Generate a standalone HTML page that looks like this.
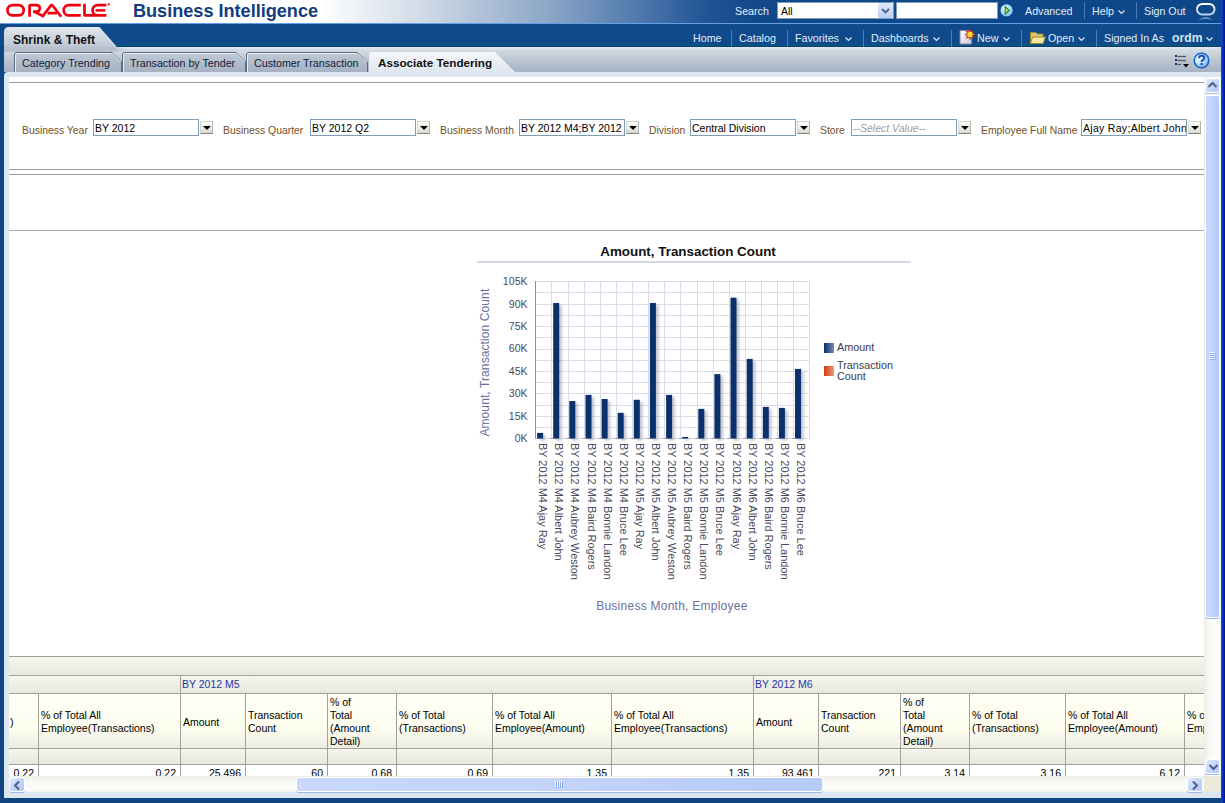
<!DOCTYPE html>
<html><head><meta charset="utf-8">
<style>
*{box-sizing:border-box;margin:0;padding:0}
html,body{width:1225px;height:803px;overflow:hidden;background:#0e4582;font-family:"Liberation Sans",sans-serif;}
.a{position:absolute;white-space:nowrap}
#hdr{left:0;top:0;width:1221px;height:23px;background:linear-gradient(to right,#fff 0,#fff 320px,#d0dae6 422px,#8ea8c8 545px,#3c6aa4 667px,#1f5394 708px,#10488a 760px,#0e488a 1221px)}
#hline{left:0;top:23px;width:1221px;height:1px;background:#62a0ea}
#nav{left:0;top:24px;width:1221px;height:23px;background:#0e4a8c}
#navb{left:0;top:44px;width:1221px;height:3px;background:linear-gradient(#0a5282,#0a5080 60%,#043a6c)}
#rb{left:1221px;top:0;width:4px;height:803px;background:linear-gradient(to right,#0a4df0,#0030c8 50%,#001878)}
#bb{left:0;top:798px;width:1221px;height:5px;background:#0e4582}
#strip{left:4px;top:47px;width:1217px;height:25px;background:linear-gradient(#e6ebf0 0,#d0dae2 14%,#bcc7d3 50%,#a7b3c3 100%)}
#panel{left:4px;top:72px;width:1217px;height:726px;background:#dde7f1;border-top-left-radius:4px}
#content{left:9px;top:77px;width:1212px;height:715px;background:#fff;overflow:hidden}
.nv{color:#e3ecf7;font-size:10.7px;top:32px}
.sep{width:1px;background:#4d7db5;}
.chev{width:7px;height:5px}
.lbl{color:#72501f;font-size:10.4px;top:125px}
.inp{height:17px;border:1px solid #7f9db9;background:#fff;font-size:10.5px;color:#000;padding:2px 0 0 1px;overflow:hidden}
.btn{width:13px;height:13px;border:1px solid #d6d6ce;border-right-color:#b4b4ac;border-bottom-color:#84847c;background:linear-gradient(#fdfdfb,#f2f2ec 40%,#d9d8ce);}
.btn:after{content:"";position:absolute;left:1.5px;top:3.5px;border-left:4px solid transparent;border-right:4px solid transparent;border-top:4px solid #000}
.tab{height:20px;font-size:10.7px;color:#111a3a}
.tt{font-size:10.5px;color:#000}
.sbb{border-radius:3px;border:1px solid #fff;box-shadow:0 1px 0 #9fb6e6;background:linear-gradient(135deg,#e3ebfd,#c4d5fa 50%,#b4c9f4)}
.sbt{border-radius:3px;border:1px solid #fff;box-shadow:0 1px 0 #9fb6e6;background:linear-gradient(to right,#c9d8fc,#c3d3fa 50%,#b5caf5)}
</style></head><body>
<div class="a" id="hdr"></div>
<div class="a" id="hline"></div>
<div class="a" id="nav"></div>
<div class="a" id="navb"></div>
<div class="a" id="rb"></div>
<div class="a" id="bb"></div>
<!-- ORACLE logo -->
<svg class="a" style="left:0;top:0" width="120" height="22" viewBox="0 0 120 22">
<g fill="none" stroke="#f0000e" stroke-width="2.7" stroke-linejoin="bevel">
<rect x="7.5" y="5.05" width="16.2" height="10.4" rx="5.2"/>
<path d="M29.6,16.8 V5.05 H36.6 a3.3,3.3 0 0 1 0,6.6 H33"/>
<path d="M34.5,11.8 L43.6,16.4"/>
<path d="M42.2,16.8 L51.2,5.2 L52.4,5.2 L61.2,16.8"/>
<path d="M47.5,13.1 H57"/>
<path d="M80.8,5.05 H68.9 a5.2,5.2 0 0 0 0,10.4 H80.8"/>
<path d="M84.5,3.8 V15.45 H96"/>
<path d="M106.3,5.05 H97.8 a5.2,5.2 0 0 0 0,10.4 H106.3"/>
<path d="M95.5,10.4 H105.3" stroke-width="2.4"/>
</g>
<circle cx="108.7" cy="4.4" r="1.1" fill="#f0000e"/>
</svg>
<div class="a" style="left:133px;top:1px;font-size:18.1px;font-weight:bold;color:#123c7e">Business Intelligence</div>

<!-- search -->
<div class="a nv" style="left:735px;top:5px">Search</div>
<div class="a" style="left:777px;top:2px;width:117px;height:17px;background:#fff;border:1px solid #7f9db9;font-size:10.5px;padding:2px 0 0 3px">All</div>
<div class="a" style="left:878px;top:3px;width:15px;height:15px;background:linear-gradient(#dfe9fb,#b9cdf5);border-radius:2px"></div>
<svg class="a" style="left:881px;top:8px" width="9" height="6"><path d="M1,1 L4.5,4.5 L8,1" fill="none" stroke="#4d6185" stroke-width="1.8"/></svg>
<div class="a" style="left:896px;top:2px;width:102px;height:17px;background:#fff;border:1px solid #7f9db9"></div>
<svg class="a" style="left:998px;top:2px" width="18" height="18"><defs><radialGradient id="gb" cx="0.4" cy="0.35" r="0.7"><stop offset="0" stop-color="#e8f6ff"/><stop offset="0.6" stop-color="#a6d6fa"/><stop offset="1" stop-color="#68b4f2"/></radialGradient></defs>
<circle cx="8.6" cy="8.4" r="6.6" fill="url(#gb)" stroke="#0a3c9c" stroke-width="1"/>
<path d="M7,4.2 L11.8,8.4 L7,12.8 Z" fill="#4aa62a" stroke="#2e7e12" stroke-width="0.8"/>
<path d="M7.8,6.5 L9.8,8.4 L7.8,10.3 Z" fill="#c8f0b0"/></svg>
<div class="a nv" style="left:1025px;top:5px">Advanced</div>
<div class="a sep" style="left:1084px;top:2px;height:17px"></div>
<div class="a nv" style="left:1092px;top:5px">Help</div>
<svg class="a chev" style="left:1118px;top:10px"><path d="M0.5,0.5 L3.5,3.5 L6.5,0.5" fill="none" stroke="#dfe9f5" stroke-width="1.2"/></svg>
<div class="a sep" style="left:1136px;top:2px;height:17px"></div>
<div class="a nv" style="left:1144px;top:5px">Sign Out</div>
<svg class="a" style="left:1194px;top:1px" width="24" height="21"><defs><linearGradient id="og" x1="0" y1="0" x2="0" y2="1"><stop offset="0" stop-color="#ffffff"/><stop offset="1" stop-color="#b8d0f0"/></linearGradient><linearGradient id="or" x1="0" y1="0" x2="0" y2="1"><stop offset="0" stop-color="#8cb0dc"/><stop offset="1" stop-color="#0e4a8c"/></linearGradient></defs>
<rect x="3" y="3" width="17.5" height="10.5" rx="5.25" fill="none" stroke="url(#og)" stroke-width="1.9"/>
<path d="M5,19.5 Q11.75,14.5 18.5,19.5" fill="none" stroke="url(#or)" stroke-width="1.6"/></svg>


<!-- nav row -->
<div class="a nv" style="left:693px">Home</div>
<div class="a sep" style="left:731px;top:30px;height:17px"></div>
<div class="a nv" style="left:739px">Catalog</div>
<div class="a sep" style="left:787px;top:30px;height:17px"></div>
<div class="a nv" style="left:795px">Favorites</div>
<svg class="a chev" style="left:845px;top:37px"><path d="M0.5,0.5 L3.5,3.5 L6.5,0.5" fill="none" stroke="#dfe9f5" stroke-width="1.2"/></svg>
<div class="a sep" style="left:863px;top:30px;height:17px"></div>
<div class="a nv" style="left:871px">Dashboards</div>
<svg class="a chev" style="left:933px;top:37px"><path d="M0.5,0.5 L3.5,3.5 L6.5,0.5" fill="none" stroke="#dfe9f5" stroke-width="1.2"/></svg>
<div class="a sep" style="left:951px;top:30px;height:17px"></div>
<svg class="a" style="left:959px;top:29px" width="17" height="16"><defs><linearGradient id="pg" x1="0" y1="0" x2="1" y2="1"><stop offset="0" stop-color="#ffffff"/><stop offset="1" stop-color="#c8c4e0"/></linearGradient></defs><path d="M1,1.5 H10 L12.5,4 V15 H1 Z" fill="url(#pg)" stroke="#8c84a8" stroke-width="1"/><path d="M11,0.5 L12,3 L14.5,2 L13.5,4.5 L16,5.5 L13.5,6.5 L14.5,9 L12,8 L11,10.5 L10,8 L7.5,9 L8.5,6.5 L6,5.5 L8.5,4.5 L7.5,2 L10,3 Z" fill="#ffe040" stroke="#c02000" stroke-width="0.9"/></svg>
<div class="a nv" style="left:977px">New</div>
<svg class="a chev" style="left:1003px;top:37px"><path d="M0.5,0.5 L3.5,3.5 L6.5,0.5" fill="none" stroke="#dfe9f5" stroke-width="1.2"/></svg>
<div class="a sep" style="left:1021px;top:30px;height:17px"></div>
<svg class="a" style="left:1030px;top:30px" width="16" height="14"><path d="M0.5,2.5 H6 L7.5,4 H13 V13.5 H0.5 Z" fill="#d8c878" stroke="#a08a30" stroke-width="1"/><path d="M2.5,7 H15.5 L13,13.5 H0.5 Z" fill="#f5e8a0" stroke="#a08a30" stroke-width="1"/></svg>
<div class="a nv" style="left:1048px">Open</div>
<svg class="a chev" style="left:1078px;top:37px"><path d="M0.5,0.5 L3.5,3.5 L6.5,0.5" fill="none" stroke="#dfe9f5" stroke-width="1.2"/></svg>
<div class="a sep" style="left:1096px;top:30px;height:17px"></div>
<div class="a nv" style="left:1104px">Signed In As</div>
<div class="a nv" style="left:1172px;top:31px;font-size:12.2px;font-weight:bold;color:#d5e5f7">ordm</div>
<svg class="a chev" style="left:1206px;top:37px"><path d="M0.5,0.5 L3.5,3.5 L6.5,0.5" fill="none" stroke="#dfe9f5" stroke-width="1.2"/></svg>

<div class="a" id="strip"></div>
<!-- Shrink & Theft tab -->
<svg class="a" style="left:4px;top:27px" width="125" height="26"><defs><linearGradient id="gs" x1="0" y1="0" x2="0" y2="1"><stop offset="0" stop-color="#e0e7ed"/><stop offset="0.8" stop-color="#bcc7d3"/><stop offset="1" stop-color="#b6c1cd"/></linearGradient>
<linearGradient id="gd" x1="0" y1="0" x2="1" y2="0"><stop offset="0" stop-color="#b6c1cd"/><stop offset="0.85" stop-color="#b6c1cd"/><stop offset="1" stop-color="#b6c1cd" stop-opacity="0"/></linearGradient></defs>
<path d="M0,25 V5 Q0,0 5,0 H95 L112,20 L113,20 V25 Z" fill="url(#gs)"/>
<rect x="0" y="20" width="125" height="5" fill="url(#gd)"/>
<path d="M95,0.5 L112,20" stroke="#d8e0e8" stroke-width="1.2" fill="none"/></svg>
<div class="a" style="left:13px;top:33px;font-size:12px;font-weight:bold;color:#111">Shrink &amp; Theft</div>

<!-- sub tabs -->
<svg class="a" style="left:0;top:50px" width="520" height="23">
<defs><linearGradient id="gt" x1="0" y1="0" x2="0" y2="1"><stop offset="0" stop-color="#c2cad6"/><stop offset="0.3" stop-color="#b8c2cf"/><stop offset="1" stop-color="#a6b2c2"/></linearGradient>
<linearGradient id="ga" x1="0" y1="0" x2="0" y2="1"><stop offset="0" stop-color="#f4f7fa"/><stop offset="1" stop-color="#dfe6ee"/></linearGradient></defs>
<g fill="url(#gt)" stroke="#5d6b82" stroke-width="1">
<path d="M14.5,22 V5 Q14.5,2.5 17,2.5 H112 L121.5,12 V22"/>
<path d="M122.5,22 V5 Q122.5,2.5 125,2.5 H236 L245.5,12 V22"/>
<path d="M246.5,22 V5 Q246.5,2.5 249,2.5 H357 L367.5,12 V22"/>
</g>
<g fill="none" stroke="#f4f6f9" stroke-width="1" opacity="0.9">
<path d="M15.5,22 V5.5 Q15.5,3.5 17.5,3.5 H111"/>
<path d="M123.5,22 V5.5 Q123.5,3.5 125.5,3.5 H235"/>
<path d="M247.5,22 V5.5 Q247.5,3.5 249.5,3.5 H356"/>
</g>
<g fill="none" stroke="#e8edf2" stroke-width="1" opacity="0.7">
<path d="M112.5,3.5 L121,12"/><path d="M236.5,3.5 L245,12"/><path d="M357.5,3.5 L367,12"/>
</g>
<path d="M369,23 V5 Q369,2 372,2 H495 L515,22 V23 Z" fill="url(#ga)"/>
</svg>
<div class="a tab" style="left:22px;top:57px">Category Trending</div>
<div class="a tab" style="left:130px;top:57px">Transaction by Tender</div>
<div class="a tab" style="left:254px;top:57px">Customer Transaction</div>
<div class="a tab" style="left:378px;top:56px;font-size:11.7px;font-weight:bold;color:#111">Associate Tendering</div>
<!-- list icon + help -->
<svg class="a" style="left:1174px;top:54px" width="16" height="15">
<g fill="#2a2a6a"><rect x="1" y="1" width="2" height="2"/><rect x="1" y="5" width="2" height="2"/><rect x="1" y="9" width="2" height="2"/></g>
<g stroke="#55555a" stroke-width="1.3"><path d="M3.5,2.5 H12"/><path d="M3.5,6.5 H12"/><path d="M3.5,10.5 H7"/></g>
<path d="M9,10 H15 L12,13.5 Z" fill="#000"/></svg>
<svg class="a" style="left:1192px;top:51px" width="19" height="19"><defs><radialGradient id="hg" cx="0.35" cy="0.35" r="0.7"><stop offset="0" stop-color="#f6fcff"/><stop offset="0.5" stop-color="#bfe2fb"/><stop offset="1" stop-color="#6cb0ec"/></radialGradient></defs>
<circle cx="9.5" cy="9.5" r="7.3" fill="url(#hg)" stroke="#1a5ec6" stroke-width="1.5"/>
<path d="M7,7.2 Q7,4.8 9.6,4.8 Q12.2,4.8 12.2,7 Q12.2,8.4 10.6,9.2 Q9.6,9.8 9.6,11" fill="none" stroke="#1a4cb4" stroke-width="2"/>
<rect x="8.5" y="12" width="2.2" height="2.2" fill="#1a4cb4"/></svg>

<div class="a" id="panel"></div>
<div class="a" id="content"></div>
<!-- prompts -->
<div class="a" style="left:9px;top:82px;width:1195px;height:1px;background:#9d9d95"></div>
<div class="a lbl" style="left:22px">Business Year</div>
<div class="a inp" style="left:93px;top:119px;width:106px">BY 2012</div>
<div class="a btn" style="left:200px;top:121px"></div>
<div class="a lbl" style="left:223px">Business Quarter</div>
<div class="a inp" style="left:310px;top:119px;width:106px">BY 2012 Q2</div>
<div class="a btn" style="left:417px;top:121px"></div>
<div class="a lbl" style="left:440px">Business Month</div>
<div class="a inp" style="left:519px;top:119px;width:106px">BY 2012 M4;BY 2012 M5</div>
<div class="a btn" style="left:626px;top:121px"></div>
<div class="a lbl" style="left:649px">Division</div>
<div class="a inp" style="left:690px;top:119px;width:106px">Central Division</div>
<div class="a btn" style="left:797px;top:121px"></div>
<div class="a lbl" style="left:820px">Store</div>
<div class="a inp" style="left:851px;top:119px;width:106px;color:#a0a0a0;font-style:italic">--Select Value--</div>
<div class="a btn" style="left:958px;top:121px"></div>
<div class="a lbl" style="left:981px">Employee Full Name</div>
<div class="a inp" style="left:1081px;top:119px;width:106px;letter-spacing:0.3px">Ajay Ray;Albert John</div>
<div class="a btn" style="left:1188px;top:121px"></div>
<div class="a" style="left:9px;top:169px;width:1195px;height:1px;background:#a0a098"></div>
<div class="a" style="left:9px;top:174px;width:1195px;height:1px;background:#a0a098"></div>
<div class="a" style="left:9px;top:230px;width:1195px;height:1px;background:#a8acb4"></div>
<!--CHART-->
<svg class="a" style="left:460px;top:235px" width="460" height="385" viewBox="460 235 460 385">
<defs><linearGradient id="sh" x1="0" x2="1"><stop offset="0" stop-color="#9aa0ac" stop-opacity="0.55"/><stop offset="1" stop-color="#c0c4cc" stop-opacity="0"/></linearGradient><filter id="bl" filterUnits="userSpaceOnUse" x="460" y="235" width="460" height="385"><feGaussianBlur stdDeviation="1.6"/></filter><linearGradient id="lg1" x1="0" x2="1"><stop offset="0" stop-color="#0d3068"/><stop offset="1" stop-color="#7090b4"/></linearGradient><linearGradient id="lg2" x1="0" x2="1"><stop offset="0" stop-color="#d63c0c"/><stop offset="1" stop-color="#ea9a84"/></linearGradient></defs>
<text x="688" y="256" text-anchor="middle" font-family="Liberation Sans" font-weight="bold" font-size="13.4" letter-spacing="0" fill="#111">Amount, Transaction Count</text>
<rect x="477" y="261" width="434" height="2" fill="#d6d6e4"/>
<line x1="535" x2="810" y1="281.5" y2="281.5" stroke="#dcdce8" stroke-width="1"/>
<line x1="535" x2="810" y1="292.5" y2="292.5" stroke="#dcdce8" stroke-width="1"/>
<line x1="535" x2="810" y1="304.5" y2="304.5" stroke="#dcdce8" stroke-width="1"/>
<line x1="535" x2="810" y1="315.5" y2="315.5" stroke="#dcdce8" stroke-width="1"/>
<line x1="535" x2="810" y1="326.5" y2="326.5" stroke="#dcdce8" stroke-width="1"/>
<line x1="535" x2="810" y1="337.5" y2="337.5" stroke="#dcdce8" stroke-width="1"/>
<line x1="535" x2="810" y1="349.5" y2="349.5" stroke="#dcdce8" stroke-width="1"/>
<line x1="535" x2="810" y1="360.5" y2="360.5" stroke="#dcdce8" stroke-width="1"/>
<line x1="535" x2="810" y1="371.5" y2="371.5" stroke="#dcdce8" stroke-width="1"/>
<line x1="535" x2="810" y1="382.5" y2="382.5" stroke="#dcdce8" stroke-width="1"/>
<line x1="535" x2="810" y1="393.5" y2="393.5" stroke="#dcdce8" stroke-width="1"/>
<line x1="535" x2="810" y1="405.5" y2="405.5" stroke="#dcdce8" stroke-width="1"/>
<line x1="535" x2="810" y1="416.5" y2="416.5" stroke="#dcdce8" stroke-width="1"/>
<line x1="535" x2="810" y1="427.5" y2="427.5" stroke="#dcdce8" stroke-width="1"/>
<line x1="535" x2="810" y1="438.5" y2="438.5" stroke="#dcdce8" stroke-width="1"/>
<line x1="535.5" x2="535.5" y1="281" y2="438" stroke="#dcdce8" stroke-width="1"/>
<line x1="551.5" x2="551.5" y1="281" y2="438" stroke="#dcdce8" stroke-width="1"/>
<line x1="568.5" x2="568.5" y1="281" y2="438" stroke="#dcdce8" stroke-width="1"/>
<line x1="584.5" x2="584.5" y1="281" y2="438" stroke="#dcdce8" stroke-width="1"/>
<line x1="600.5" x2="600.5" y1="281" y2="438" stroke="#dcdce8" stroke-width="1"/>
<line x1="616.5" x2="616.5" y1="281" y2="438" stroke="#dcdce8" stroke-width="1"/>
<line x1="632.5" x2="632.5" y1="281" y2="438" stroke="#dcdce8" stroke-width="1"/>
<line x1="648.5" x2="648.5" y1="281" y2="438" stroke="#dcdce8" stroke-width="1"/>
<line x1="664.5" x2="664.5" y1="281" y2="438" stroke="#dcdce8" stroke-width="1"/>
<line x1="680.5" x2="680.5" y1="281" y2="438" stroke="#dcdce8" stroke-width="1"/>
<line x1="697.5" x2="697.5" y1="281" y2="438" stroke="#dcdce8" stroke-width="1"/>
<line x1="713.5" x2="713.5" y1="281" y2="438" stroke="#dcdce8" stroke-width="1"/>
<line x1="729.5" x2="729.5" y1="281" y2="438" stroke="#dcdce8" stroke-width="1"/>
<line x1="745.5" x2="745.5" y1="281" y2="438" stroke="#dcdce8" stroke-width="1"/>
<line x1="761.5" x2="761.5" y1="281" y2="438" stroke="#dcdce8" stroke-width="1"/>
<line x1="777.5" x2="777.5" y1="281" y2="438" stroke="#dcdce8" stroke-width="1"/>
<line x1="793.5" x2="793.5" y1="281" y2="438" stroke="#dcdce8" stroke-width="1"/>
<line x1="809.5" x2="809.5" y1="281" y2="438" stroke="#dcdce8" stroke-width="1"/>
<line x1="535.5" x2="535.5" y1="281" y2="439" stroke="#8a8aaa" stroke-width="1"/>
<line x1="535.0" x2="542.6" y1="438.5" y2="438.5" stroke="#a4a4c8" stroke-width="1"/>
<line x1="549.7" x2="558.7" y1="438.5" y2="438.5" stroke="#a4a4c8" stroke-width="1"/>
<line x1="565.8" x2="574.8" y1="438.5" y2="438.5" stroke="#a4a4c8" stroke-width="1"/>
<line x1="582.0" x2="591.0" y1="438.5" y2="438.5" stroke="#a4a4c8" stroke-width="1"/>
<line x1="598.1" x2="607.1" y1="438.5" y2="438.5" stroke="#a4a4c8" stroke-width="1"/>
<line x1="614.2" x2="623.2" y1="438.5" y2="438.5" stroke="#a4a4c8" stroke-width="1"/>
<line x1="630.3" x2="639.3" y1="438.5" y2="438.5" stroke="#a4a4c8" stroke-width="1"/>
<line x1="646.4" x2="655.4" y1="438.5" y2="438.5" stroke="#a4a4c8" stroke-width="1"/>
<line x1="662.6" x2="671.6" y1="438.5" y2="438.5" stroke="#a4a4c8" stroke-width="1"/>
<line x1="678.7" x2="687.7" y1="438.5" y2="438.5" stroke="#a4a4c8" stroke-width="1"/>
<line x1="694.8" x2="703.8" y1="438.5" y2="438.5" stroke="#a4a4c8" stroke-width="1"/>
<line x1="710.9" x2="719.9" y1="438.5" y2="438.5" stroke="#a4a4c8" stroke-width="1"/>
<line x1="727.0" x2="736.0" y1="438.5" y2="438.5" stroke="#a4a4c8" stroke-width="1"/>
<line x1="743.2" x2="752.2" y1="438.5" y2="438.5" stroke="#a4a4c8" stroke-width="1"/>
<line x1="759.3" x2="768.3" y1="438.5" y2="438.5" stroke="#a4a4c8" stroke-width="1"/>
<line x1="775.4" x2="784.4" y1="438.5" y2="438.5" stroke="#a4a4c8" stroke-width="1"/>
<line x1="791.5" x2="800.5" y1="438.5" y2="438.5" stroke="#a4a4c8" stroke-width="1"/>
<rect x="539.6" y="434.9" width="6" height="5.5" fill="#8a8f9c" opacity="0.55" filter="url(#bl)"/>
<rect x="537.1" y="432.9" width="6" height="5.5" fill="#0a316c"/>
<rect x="555.7" y="305.0" width="6" height="135.4" fill="#8a8f9c" opacity="0.55" filter="url(#bl)"/>
<rect x="553.2" y="303.0" width="6" height="135.4" fill="#0a316c"/>
<rect x="571.8" y="403.0" width="6" height="37.4" fill="#8a8f9c" opacity="0.55" filter="url(#bl)"/>
<rect x="569.3" y="401.0" width="6" height="37.4" fill="#0a316c"/>
<rect x="588.0" y="396.9" width="6" height="43.5" fill="#8a8f9c" opacity="0.55" filter="url(#bl)"/>
<rect x="585.5" y="394.9" width="6" height="43.5" fill="#0a316c"/>
<rect x="604.1" y="401.0" width="6" height="39.4" fill="#8a8f9c" opacity="0.55" filter="url(#bl)"/>
<rect x="601.6" y="399.0" width="6" height="39.4" fill="#0a316c"/>
<rect x="620.2" y="414.8" width="6" height="25.6" fill="#8a8f9c" opacity="0.55" filter="url(#bl)"/>
<rect x="617.7" y="412.8" width="6" height="25.6" fill="#0a316c"/>
<rect x="636.3" y="401.8" width="6" height="38.6" fill="#8a8f9c" opacity="0.55" filter="url(#bl)"/>
<rect x="633.8" y="399.8" width="6" height="38.6" fill="#0a316c"/>
<rect x="652.4" y="305.0" width="6" height="135.4" fill="#8a8f9c" opacity="0.55" filter="url(#bl)"/>
<rect x="649.9" y="303.0" width="6" height="135.4" fill="#0a316c"/>
<rect x="668.6" y="396.9" width="6" height="43.5" fill="#8a8f9c" opacity="0.55" filter="url(#bl)"/>
<rect x="666.1" y="394.9" width="6" height="43.5" fill="#0a316c"/>
<rect x="684.7" y="439.0" width="6" height="1.4" fill="#8a8f9c" opacity="0.55" filter="url(#bl)"/>
<rect x="682.2" y="437.0" width="6" height="1.4" fill="#0a316c"/>
<rect x="700.8" y="410.9" width="6" height="29.5" fill="#8a8f9c" opacity="0.55" filter="url(#bl)"/>
<rect x="698.3" y="408.9" width="6" height="29.5" fill="#0a316c"/>
<rect x="716.9" y="376.1" width="6" height="64.3" fill="#8a8f9c" opacity="0.55" filter="url(#bl)"/>
<rect x="714.4" y="374.1" width="6" height="64.3" fill="#0a316c"/>
<rect x="733.0" y="299.7" width="6" height="140.7" fill="#8a8f9c" opacity="0.55" filter="url(#bl)"/>
<rect x="730.5" y="297.7" width="6" height="140.7" fill="#0a316c"/>
<rect x="749.2" y="360.9" width="6" height="79.5" fill="#8a8f9c" opacity="0.55" filter="url(#bl)"/>
<rect x="746.7" y="358.9" width="6" height="79.5" fill="#0a316c"/>
<rect x="765.3" y="408.9" width="6" height="31.5" fill="#8a8f9c" opacity="0.55" filter="url(#bl)"/>
<rect x="762.8" y="406.9" width="6" height="31.5" fill="#0a316c"/>
<rect x="781.4" y="409.9" width="6" height="30.5" fill="#8a8f9c" opacity="0.55" filter="url(#bl)"/>
<rect x="778.9" y="407.9" width="6" height="30.5" fill="#0a316c"/>
<rect x="797.5" y="370.9" width="6" height="69.5" fill="#8a8f9c" opacity="0.55" filter="url(#bl)"/>
<rect x="795.0" y="368.9" width="6" height="69.5" fill="#0a316c"/>
<text x="527.6" y="442.1" text-anchor="end" font-family="Liberation Sans" font-size="10.6" fill="#4a4a58">0K</text>
<text x="527.6" y="419.7" text-anchor="end" font-family="Liberation Sans" font-size="10.6" fill="#4a4a58">15K</text>
<text x="527.6" y="397.3" text-anchor="end" font-family="Liberation Sans" font-size="10.6" fill="#4a4a58">30K</text>
<text x="527.6" y="374.9" text-anchor="end" font-family="Liberation Sans" font-size="10.6" fill="#4a4a58">45K</text>
<text x="527.6" y="352.4" text-anchor="end" font-family="Liberation Sans" font-size="10.6" fill="#4a4a58">60K</text>
<text x="527.6" y="330.0" text-anchor="end" font-family="Liberation Sans" font-size="10.6" fill="#4a4a58">75K</text>
<text x="527.6" y="307.6" text-anchor="end" font-family="Liberation Sans" font-size="10.6" fill="#4a4a58">90K</text>
<text x="527.6" y="285.2" text-anchor="end" font-family="Liberation Sans" font-size="10.6" fill="#4a4a58">105K</text>
<text transform="translate(539.1,442.9) rotate(90)" font-family="Liberation Sans" font-size="10.95" fill="#4a4a5e">BY 2012 M4 Ajay Ray</text>
<text transform="translate(555.2,442.9) rotate(90)" font-family="Liberation Sans" font-size="10.95" fill="#4a4a5e">BY 2012 M4 Albert John</text>
<text transform="translate(571.3,442.9) rotate(90)" font-family="Liberation Sans" font-size="10.95" fill="#4a4a5e">BY 2012 M4 Aubrey Weston</text>
<text transform="translate(587.5,442.9) rotate(90)" font-family="Liberation Sans" font-size="10.95" fill="#4a4a5e">BY 2012 M4 Baird Rogers</text>
<text transform="translate(603.6,442.9) rotate(90)" font-family="Liberation Sans" font-size="10.95" fill="#4a4a5e">BY 2012 M4 Bonnie Landon</text>
<text transform="translate(619.7,442.9) rotate(90)" font-family="Liberation Sans" font-size="10.95" fill="#4a4a5e">BY 2012 M4 Bruce Lee</text>
<text transform="translate(635.8,442.9) rotate(90)" font-family="Liberation Sans" font-size="10.95" fill="#4a4a5e">BY 2012 M5 Ajay Ray</text>
<text transform="translate(651.9,442.9) rotate(90)" font-family="Liberation Sans" font-size="10.95" fill="#4a4a5e">BY 2012 M5 Albert John</text>
<text transform="translate(668.1,442.9) rotate(90)" font-family="Liberation Sans" font-size="10.95" fill="#4a4a5e">BY 2012 M5 Aubrey Weston</text>
<text transform="translate(684.2,442.9) rotate(90)" font-family="Liberation Sans" font-size="10.95" fill="#4a4a5e">BY 2012 M5 Baird Rogers</text>
<text transform="translate(700.3,442.9) rotate(90)" font-family="Liberation Sans" font-size="10.95" fill="#4a4a5e">BY 2012 M5 Bonnie Landon</text>
<text transform="translate(716.4,442.9) rotate(90)" font-family="Liberation Sans" font-size="10.95" fill="#4a4a5e">BY 2012 M5 Bruce Lee</text>
<text transform="translate(732.5,442.9) rotate(90)" font-family="Liberation Sans" font-size="10.95" fill="#4a4a5e">BY 2012 M6 Ajay Ray</text>
<text transform="translate(748.7,442.9) rotate(90)" font-family="Liberation Sans" font-size="10.95" fill="#4a4a5e">BY 2012 M6 Albert John</text>
<text transform="translate(764.8,442.9) rotate(90)" font-family="Liberation Sans" font-size="10.95" fill="#4a4a5e">BY 2012 M6 Baird Rogers</text>
<text transform="translate(780.9,442.9) rotate(90)" font-family="Liberation Sans" font-size="10.95" fill="#4a4a5e">BY 2012 M6 Bonnie Landon</text>
<text transform="translate(797.0,442.9) rotate(90)" font-family="Liberation Sans" font-size="10.95" fill="#4a4a5e">BY 2012 M6 Bruce Lee</text>
<text transform="translate(488.8,436.6) rotate(-90)" font-family="Liberation Sans" font-size="12" letter-spacing="0.1" fill="#6b6f9c">Amount, Transaction Count</text>
<text x="596.2" y="610.1" font-family="Liberation Sans" font-size="12" letter-spacing="0.25" fill="#6b6f9c">Business Month, Employee</text>
<rect x="824" y="343" width="10" height="10" fill="url(#lg1)"/>
<rect x="824" y="366" width="10" height="10" fill="url(#lg2)"/>
<text x="837" y="350.8" font-family="Liberation Sans" font-size="10.8" fill="#3b3b4e">Amount</text>
<text x="837" y="368.8" font-family="Liberation Sans" font-size="10.8" fill="#3b3b4e">Transaction</text>
<text x="837" y="379.8" font-family="Liberation Sans" font-size="10.8" fill="#3b3b4e">Count</text>
</svg>
<!--/CHART-->
<!--TABLE-->
<div class="a" style="left:9px;top:656px;width:1195px;height:120px;overflow:hidden">
<div class="a" style="left:0px;top:0px;width:1195px;height:19px;background:linear-gradient(#f6f5ee,#e9e8de);border-top:1px solid #a3a29a"></div>
<div class="a" style="left:0px;top:19px;width:1195px;height:18px;background:linear-gradient(#f6f5ee,#e9e8de);border-top:1px solid #a3a29a"></div>
<div class="a" style="left:0px;top:37px;width:1195px;height:55px;background:linear-gradient(#fefef4 0,#fdfdf0 60%,#eeede2 100%);border-top:1px solid #a3a29a"></div>
<div class="a" style="left:0px;top:92px;width:1195px;height:16px;background:linear-gradient(#f6f5ee,#e9e8de);border-top:1px solid #a3a29a"></div>
<div class="a" style="left:0px;top:108px;width:1195px;height:12px;background:#fff;border-top:1px solid #a3a29a"></div>
<div class="a" style="left:29px;top:37px;width:1px;height:83px;background:#a3a29a"></div>
<div class="a" style="left:171px;top:37px;width:1px;height:83px;background:#a3a29a"></div>
<div class="a" style="left:236px;top:37px;width:1px;height:83px;background:#a3a29a"></div>
<div class="a" style="left:318px;top:37px;width:1px;height:83px;background:#a3a29a"></div>
<div class="a" style="left:387px;top:37px;width:1px;height:83px;background:#a3a29a"></div>
<div class="a" style="left:483px;top:37px;width:1px;height:83px;background:#a3a29a"></div>
<div class="a" style="left:602px;top:37px;width:1px;height:83px;background:#a3a29a"></div>
<div class="a" style="left:744px;top:37px;width:1px;height:83px;background:#a3a29a"></div>
<div class="a" style="left:809px;top:37px;width:1px;height:83px;background:#a3a29a"></div>
<div class="a" style="left:891px;top:37px;width:1px;height:83px;background:#a3a29a"></div>
<div class="a" style="left:960px;top:37px;width:1px;height:83px;background:#a3a29a"></div>
<div class="a" style="left:1056px;top:37px;width:1px;height:83px;background:#a3a29a"></div>
<div class="a" style="left:1175px;top:37px;width:1px;height:83px;background:#a3a29a"></div>
<div class="a" style="left:171px;top:19px;width:1px;height:18px;background:#a3a29a"></div>
<div class="a" style="left:744px;top:19px;width:1px;height:18px;background:#a3a29a"></div>
<div class="a tt" style="left:173px;top:22px;color:#2535a8">BY 2012 M5</div>
<div class="a tt" style="left:746px;top:22px;color:#2535a8">BY 2012 M6</div>
<div class="a tt" style="left:1px;top:59.5px;line-height:13px">)</div>
<div class="a tt" style="left:32px;top:53.0px;line-height:13px">% of Total All<br>Employee(Transactions)</div>
<div class="a tt" style="left:174px;top:59.5px;line-height:13px">Amount</div>
<div class="a tt" style="left:239px;top:53.0px;line-height:13px">Transaction<br>Count</div>
<div class="a tt" style="left:321px;top:40.0px;line-height:13px">% of<br>Total<br>(Amount<br>Detail)</div>
<div class="a tt" style="left:390px;top:53.0px;line-height:13px">% of Total<br>(Transactions)</div>
<div class="a tt" style="left:486px;top:53.0px;line-height:13px">% of Total All<br>Employee(Amount)</div>
<div class="a tt" style="left:605px;top:53.0px;line-height:13px">% of Total All<br>Employee(Transactions)</div>
<div class="a tt" style="left:747px;top:59.5px;line-height:13px">Amount</div>
<div class="a tt" style="left:812px;top:53.0px;line-height:13px">Transaction<br>Count</div>
<div class="a tt" style="left:894px;top:40.0px;line-height:13px">% of<br>Total<br>(Amount<br>Detail)</div>
<div class="a tt" style="left:963px;top:53.0px;line-height:13px">% of Total<br>(Transactions)</div>
<div class="a tt" style="left:1059px;top:53.0px;line-height:13px">% of Total All<br>Employee(Amount)</div>
<div class="a tt" style="left:1178px;top:53.0px;line-height:13px">% of Total All<br>Employee(Transactions)</div>
<div class="a tt" style="left:0px;width:25px;text-align:right;top:111px">0.22</div>
<div class="a tt" style="left:29px;width:138px;text-align:right;top:111px">0.22</div>
<div class="a tt" style="left:171px;width:61px;text-align:right;top:111px">25,496</div>
<div class="a tt" style="left:236px;width:78px;text-align:right;top:111px">60</div>
<div class="a tt" style="left:318px;width:65px;text-align:right;top:111px">0.68</div>
<div class="a tt" style="left:387px;width:92px;text-align:right;top:111px">0.69</div>
<div class="a tt" style="left:483px;width:115px;text-align:right;top:111px">1.35</div>
<div class="a tt" style="left:602px;width:138px;text-align:right;top:111px">1.35</div>
<div class="a tt" style="left:744px;width:61px;text-align:right;top:111px">93,461</div>
<div class="a tt" style="left:809px;width:78px;text-align:right;top:111px">221</div>
<div class="a tt" style="left:891px;width:65px;text-align:right;top:111px">3.14</div>
<div class="a tt" style="left:960px;width:92px;text-align:right;top:111px">3.16</div>
<div class="a tt" style="left:1056px;width:115px;text-align:right;top:111px">6.12</div>
<div class="a tt" style="left:1175px;width:16px;text-align:right;top:111px"></div>
</div>
<!--/TABLE-->
<!--SCROLL-->
<div class="a" style="left:1204px;top:77px;width:17px;height:699px;background:linear-gradient(to right,#eeede5,#f8f8f4 30%,#fdfdfb 80%,#f4f3ee)"></div>
<div class="a sbb" style="left:1205px;top:78px;width:15px;height:15px"></div>
<svg class="a" style="left:1207px;top:81px" width="11" height="8"><path d="M1.5,6 L5.5,2 L9.5,6" fill="none" stroke="#4d6185" stroke-width="2"/></svg>
<div class="a sbt" style="left:1205px;top:95px;width:15px;height:523px"></div>
<svg class="a" style="left:1208px;top:351px" width="9" height="10"><g stroke-width="1"><path d="M1,1.5 H7 M1,3.5 H7 M1,5.5 H7 M1,7.5 H7" stroke="#eef4ff"/><path d="M2,2.5 H8 M2,4.5 H8 M2,6.5 H8 M2,8.5 H8" stroke="#8cb0f0"/></g></svg>
<div class="a sbb" style="left:1205px;top:759px;width:15px;height:15px"></div>
<svg class="a" style="left:1208px;top:763px" width="11" height="8"><path d="M1.5,2 L5.5,6 L9.5,2" fill="none" stroke="#4d6185" stroke-width="2"/></svg>
<div class="a" style="left:9px;top:776px;width:1195px;height:16px;background:linear-gradient(#eeede5,#f8f8f4 30%,#fdfdfb 80%,#f4f3ee)"></div>
<div class="a sbb" style="left:9px;top:777px;width:16px;height:15px"></div>
<svg class="a" style="left:13px;top:780px" width="8" height="11"><path d="M6,1.5 L2,5.5 L6,9.5" fill="none" stroke="#4d6185" stroke-width="2"/></svg>
<div class="a sbt" style="left:296px;top:777px;width:527px;height:15px"></div>
<svg class="a" style="left:554px;top:780px" width="10" height="9"><g stroke-width="1"><path d="M1.5,1 V7 M3.5,1 V7 M5.5,1 V7 M7.5,1 V7" stroke="#eef4ff"/><path d="M2.5,2 V8 M4.5,2 V8 M6.5,2 V8 M8.5,2 V8" stroke="#8cb0f0"/></g></svg>
<div class="a sbb" style="left:1187px;top:777px;width:16px;height:15px"></div>
<svg class="a" style="left:1191px;top:780px" width="8" height="11"><path d="M2,1.5 L6,5.5 L2,9.5" fill="none" stroke="#4d6185" stroke-width="2"/></svg>
<div class="a" style="left:1204px;top:776px;width:17px;height:16px;background:#ece9d8"></div>

<!--/SCROLL-->

</body></html>
